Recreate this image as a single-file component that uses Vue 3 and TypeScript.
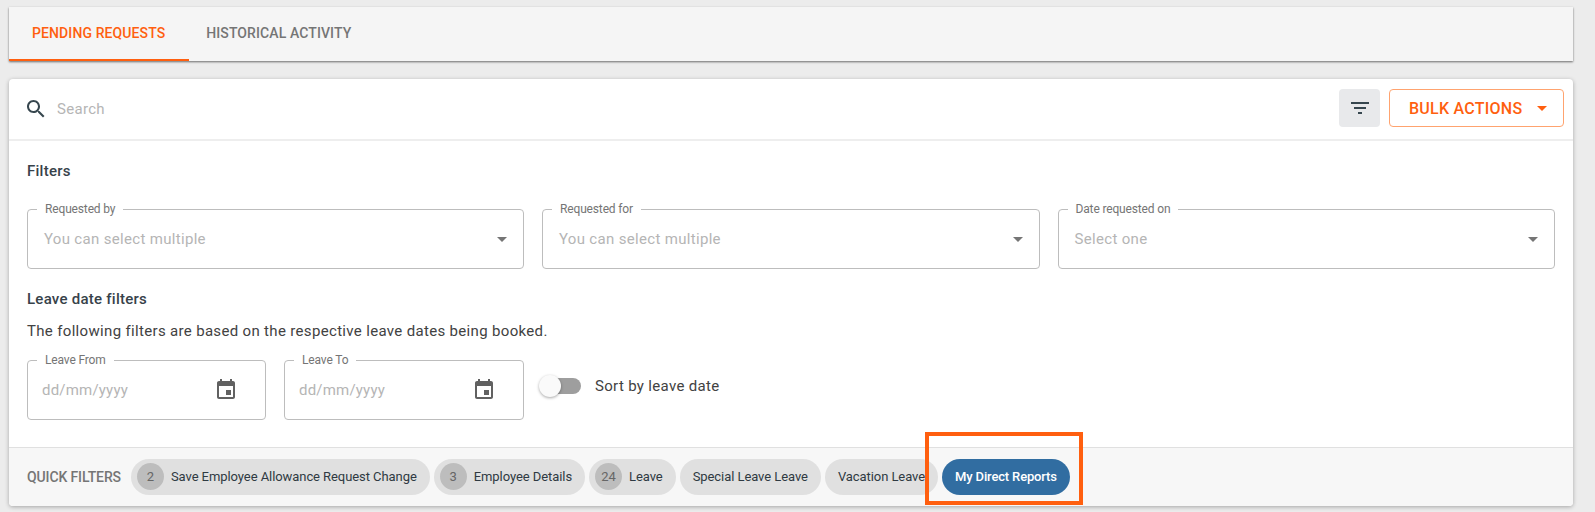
<script setup lang="ts">
import { ref } from 'vue';

interface Chip {
  label: string;
  count?: number;
  active?: boolean;
}

const activeTab = ref('pending');

const selects = [
  { label: 'Requested by', placeholder: 'You can select multiple' },
  { label: 'Requested for', placeholder: 'You can select multiple' },
  { label: 'Date requested on', placeholder: 'Select one' },
];

const dates = ['Leave From', 'Leave To'];

const chips: Chip[] = [
  { label: 'Save Employee Allowance Request Change', count: 2 },
  { label: 'Employee Details', count: 3 },
  { label: 'Leave', count: 24 },
  { label: 'Special Leave Leave' },
  { label: 'Vacation Leave' },
  { label: 'My Direct Reports', active: true },
];
</script>

<template>
  <div class="page">
    <nav class="tabs">
      <button class="tab" :class="{ active: activeTab === 'pending' }" @click="activeTab = 'pending'">Pending Requests</button>
      <button class="tab" :class="{ active: activeTab === 'history' }" @click="activeTab = 'history'">Historical Activity</button>
    </nav>

    <section class="card">
      <header class="search-row">
        <svg class="search-icon" viewBox="0 0 24 24" width="24" height="24">
          <path d="M15.5 14h-.79l-.28-.27C15.41 12.59 16 11.11 16 9.5 16 5.91 13.09 3 9.5 3S3 5.91 3 9.5 5.91 16 9.5 16c1.61 0 3.09-.59 4.23-1.57l.27.28v.79l5 4.99L20.49 19l-4.99-5zm-6 0C7.01 14 5 11.99 5 9.5S7.01 5 9.5 5 14 7.01 14 9.5 11.99 14 9.5 14z" />
        </svg>
        <span class="search-text">Search</span>
        <button class="filter-btn">
          <svg viewBox="0 0 24 24" width="24" height="24">
            <path d="M10 18h4v-2h-4v2zM3 6v2h18V6H3zm3 7h12v-2H6v2z" />
          </svg>
        </button>
        <button class="bulk-btn">
          Bulk Actions
          <span class="caret"></span>
        </button>
      </header>

      <div class="filters">
        <h3 class="heading">Filters</h3>
        <div class="select-grid">
          <div class="field" v-for="s in selects" :key="s.label">
            <label class="field-label">{{ s.label }}</label>
            <span class="placeholder">{{ s.placeholder }}</span>
            <span class="select-caret"></span>
          </div>
        </div>

        <h3 class="heading leave-heading">Leave date filters</h3>
        <p class="desc">The following filters are based on the respective leave dates being booked.</p>

        <div class="date-row">
          <div class="field date-field" v-for="d in dates" :key="d">
            <label class="field-label">{{ d }}</label>
            <span class="placeholder date-text">dd/mm/yyyy</span>
            <svg class="cal" viewBox="0 0 24 24" width="24" height="24">
              <path d="M17 12h-5v5h5v-5zM16 1v2H8V1H6v2H5c-1.11 0-1.99.9-1.99 2L3 19c0 1.1.89 2 2 2h14c1.1 0 2-.9 2-2V5c0-1.1-.9-2-2-2h-1V1h-2zm3 18H5V8h14v11z" />
            </svg>
          </div>
          <div class="toggle-wrap">
            <span class="toggle"><span class="thumb"></span></span>
            <span class="toggle-label">Sort by leave date</span>
          </div>
        </div>
      </div>

      <footer class="quick">
        <span class="quick-title">Quick Filters</span>
        <div class="chip" v-for="c in chips" :key="c.label" :class="{ active: c.active, counted: c.count }">
          <span class="count" v-if="c.count">{{ c.count }}</span>
          {{ c.label }}
        </div>
      </footer>
    </section>

    <div class="highlight"></div>
  </div>
</template>

<style>
html,
body {
  margin: 0;
  background: #ececec;
}
</style>

<style scoped>
.page {
  position: relative;
  height: 512px;
  box-sizing: border-box;
  padding: 7px 22px 0 9px;
  font-family: Roboto, "Liberation Sans", sans-serif;
  overflow: hidden;
}

.tabs {
  display: flex;
  height: 54px;
  box-sizing: border-box;
  background: #f5f5f5;
  box-shadow: 0 1px 2px rgba(0, 0, 0, 0.55);
}

.tab {
  height: 54px;
  padding: 0 24px 1px 23px;
  border: none;
  border-bottom: 2px solid transparent;
  background: transparent;
  font-family: inherit;
  font-size: 14px;
  font-weight: 500;
  letter-spacing: 0.1px;
  text-transform: uppercase;
  color: #757575;
  cursor: pointer;
}

.tab:nth-child(2) {
  padding: 0 17px 1px;
}

.tab.active {
  color: #ff5f0f;
  border-bottom-color: #ff5f0f;
}

.card {
  margin-top: 18px;
  height: 427px;
  background: #fff;
  border-radius: 4px;
  box-shadow: 0 1px 4px rgba(0, 0, 0, 0.3);
  overflow: hidden;
  display: flex;
  flex-direction: column;
}

.search-row {
  display: flex;
  align-items: center;
  height: 62px;
  box-sizing: border-box;
  padding: 0 9px 2px 15px;
  border-bottom: 2px solid #eeeeee;
}

.search-icon {
  fill: #37474f;
  margin-top: 1px;
}

.search-text {
  flex: 1;
  margin: 2px 0 0 9px;
  font-size: 15px;
  color: #b5b5b5;
  letter-spacing: 0.3px;
}

.filter-btn {
  width: 41px;
  height: 38px;
  padding: 0;
  border: none;
  border-radius: 4px;
  background: #e8e9eb;
  display: flex;
  align-items: center;
  justify-content: center;
  margin-right: 9px;
}

.filter-btn svg {
  fill: #37474f;
}

.bulk-btn {
  width: 175px;
  height: 38px;
  box-sizing: border-box;
  padding: 0 0 0 19px;
  border: 1px solid #ffa36f;
  border-radius: 4px;
  background: #fff;
  display: flex;
  align-items: center;
  font-family: inherit;
  font-size: 16px;
  font-weight: 500;
  letter-spacing: 0.25px;
  text-transform: uppercase;
  color: #ff5f0f;
}

.caret {
  margin-left: 15px;
  border-left: 5.5px solid transparent;
  border-right: 5.5px solid transparent;
  border-top: 5.5px solid #ff5f0f;
}

.filters {
  flex: 1;
  padding: 20px 18px 0;
}

.heading {
  margin: 0;
  font-size: 15px;
  line-height: 20px;
  font-weight: 500;
  letter-spacing: 0.25px;
  color: #37424a;
}

.select-grid {
  display: grid;
  grid-template-columns: 497px 497.5px 1fr;
  gap: 18px;
  margin-top: 28px;
}

.field {
  position: relative;
  height: 60px;
  box-sizing: border-box;
  border: 1px solid #bdbdbd;
  border-radius: 4px;
  display: flex;
  align-items: center;
  padding: 0 16px;
}

.field-label {
  position: absolute;
  top: -8px;
  left: 9px;
  padding: 0 8px;
  background: #fff;
  font-size: 12px;
  line-height: 14px;
  letter-spacing: -0.15px;
  color: #757575;
}

.placeholder {
  font-size: 15px;
  letter-spacing: 0.32px;
  color: #b5b5b5;
}

.select-caret {
  margin-left: auto;
  border-left: 5px solid transparent;
  border-right: 5px solid transparent;
  border-top: 5px solid #757575;
}

.leave-heading {
  margin-top: 20px;
}

.desc {
  margin: 12px 0 0;
  font-size: 15px;
  line-height: 20px;
  letter-spacing: 0.33px;
  color: #424242;
}

.date-row {
  display: flex;
  gap: 18px;
  margin-top: 19px;
}

.date-field {
  width: 239px;
  padding: 0 14px;
}

.date-field:nth-child(2) {
  width: 240px;
}

.date-text {
  flex: 1;
  letter-spacing: 0.2px;
}

.cal {
  fill: #616161;
  margin-right: 13px;
}

.toggle-wrap {
  display: flex;
  align-items: center;
  height: 52px;
  margin-left: -3px;
}

.toggle {
  position: relative;
  width: 38px;
  height: 16px;
  margin-left: 4px;
  border-radius: 8px;
  background: #9e9e9e;
}

.thumb {
  position: absolute;
  top: -3px;
  left: -4px;
  width: 22px;
  height: 22px;
  border-radius: 50%;
  background: #fafafa;
  box-shadow: 0 1px 3px rgba(0, 0, 0, 0.35);
}

.toggle-label {
  margin-left: 14px;
  font-size: 15px;
  letter-spacing: 0.33px;
  color: #424242;
}

.quick {
  display: flex;
  align-items: center;
  gap: 4px;
  height: 59px;
  box-sizing: border-box;
  padding: 0 0 0 18px;
  background: #f7f7f7;
  border-top: 1px solid #e0e0e0;
}

.quick-title {
  margin: 0 6px 1px 0;
  font-size: 14px;
  font-weight: 500;
  letter-spacing: -0.12px;
  text-transform: uppercase;
  color: #757575;
}

.chip {
  display: flex;
  align-items: center;
  height: 36px;
  box-sizing: border-box;
  padding: 0 13px 1px;
  border-radius: 18px;
  background: #e0e0e0;
  font-size: 13px;
  letter-spacing: -0.07px;
  color: #2f3a42;
  white-space: nowrap;
}

.chip.counted {
  padding-left: 6px;
}

.chip.active {
  background: #316da1;
  color: #fff;
  font-weight: 500;
  letter-spacing: -0.15px;
}

.count {
  display: flex;
  align-items: center;
  justify-content: center;
  width: 27px;
  height: 27px;
  margin-right: 7px;
  border-radius: 50%;
  background: #bdbdbd;
  color: #666;
}

.highlight {
  position: absolute;
  left: 925px;
  top: 432px;
  width: 158px;
  height: 73px;
  box-sizing: border-box;
  border: 4px solid #ff5f0f;
  pointer-events: none;
}
</style>
